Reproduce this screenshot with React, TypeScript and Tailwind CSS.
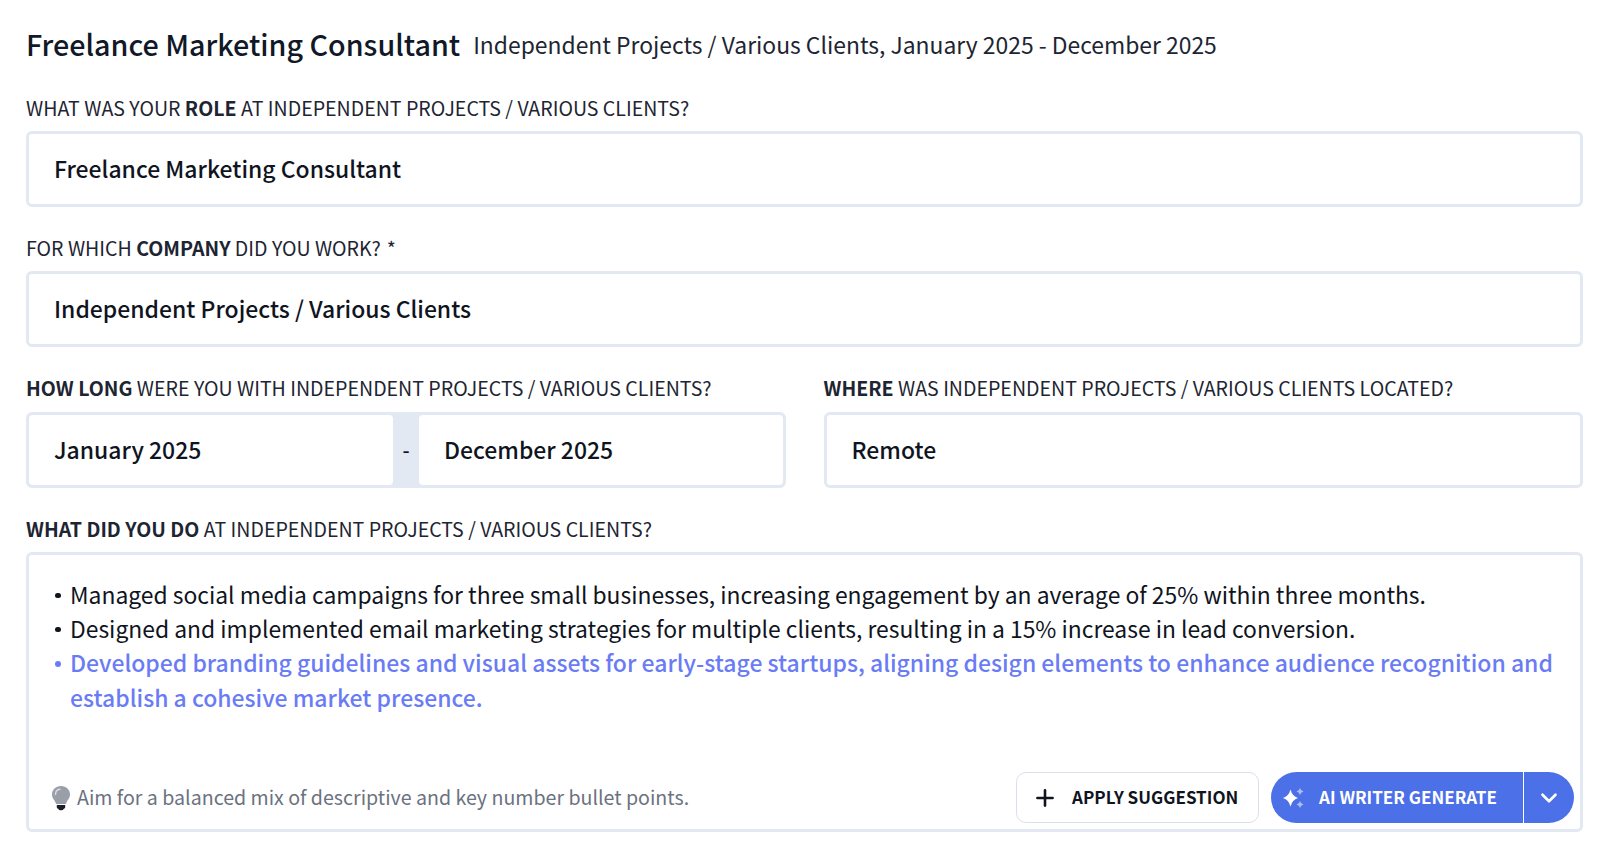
import React from "react";
import { ChevronDown, Plus } from "lucide-react";

const company = "INDEPENDENT PROJECTS / VARIOUS CLIENTS";

const Label = ({ children }: { children: React.ReactNode }) => (
  <label className="block h-[24px] text-[19.57px] leading-[24px] text-[#1e2532]">
    {children}
  </label>
);

const Field = ({ value }: { value: string }) => (
  <div className="flex h-[76px] items-center rounded-[6px] border-[3px] border-[#e3e9f2] bg-white px-[25px] pb-[1px] text-[22.95px] font-medium text-[#0f141e]">
    {value}
  </div>
);

const Bullet = () => (
  <span className="ml-[1px] mr-[9.5px] mt-[16px] h-[5.5px] w-[5.5px] shrink-0 rounded-full bg-current" />
);

const Sparkle = () => (
  <svg width="24" height="24" viewBox="0 0 24 24" fill="white">
    <path d="M9.500 3.500Q11.200 10.200 17 12 11.200 13.800 9.500 20.500 7.800 13.800 2 12 7.800 10.200 9.500 3.500z" />
    <path opacity=".55" d="M19 2Q19.600 4.900 22.500 5.500 19.600 6.100 19 9 18.400 6.100 15.500 5.500 18.400 4.900 19 2z" />
    <path opacity=".55" d="M19 15Q19.600 17.900 22.500 18.500 19.600 19.100 19 22 18.400 19.100 15.500 18.500 18.400 17.900 19 15z" />
  </svg>
);

const Bulb = () => (
  <svg width="20" height="26" viewBox="0 0 20 26">
    <path fill="#9a9ea8" d="M10 1C4.800 1 1 4.800 1 9.600c0 3.600 2.600 5.600 3.600 8.200.3.800.5 1.200 1.300 1.200h8.200c.8 0 1-.4 1.300-1.200 1-2.600 3.600-4.600 3.600-8.200C19 4.800 15.200 1 10 1z" />
    <path fill="#1b1e26" d="M5.800 20h8.400v2.200c0 .8-.6 1.300-1.400 1.500-.5 1-1.500 1.500-2.800 1.500s-2.300-.5-2.800-1.500c-.8-.2-1.400-.7-1.400-1.500z" />
    <path fill="none" stroke="#d9dbe0" strokeWidth="1.500" strokeLinecap="round" d="M4.500 9.500C4.500 6.500 6.500 4.500 9 4.200" />
  </svg>
);

export default function App() {
  return (
    <div className="h-[855px] w-[1600px] overflow-hidden bg-white pl-[26px] pr-[17px] font-['Noto_Sans_CJK_SC','Noto_Sans',sans-serif]">
      <div className="flex h-[88px] items-center gap-[13px]">
        <h1 className="text-[28.7px] font-medium leading-[40px] text-[#111827]">Freelance Marketing Consultant</h1>
        <span className="text-[22.88px] leading-[32px] text-[#1e2532]">
          Independent Projects / Various Clients, January 2025 - December 2025
        </span>
      </div>

      <div className="mt-[8px]">
        <Label>
          WHAT WAS YOUR <b>ROLE</b> AT {company}?
        </Label>
      </div>
      <div className="mt-[11px]">
        <Field value="Freelance Marketing Consultant" />
      </div>

      <div className="mt-[29px]">
        <Label>
          FOR WHICH <b>COMPANY</b> DID YOU WORK?<span className="ml-[6px]">*</span>
        </Label>
      </div>
      <div className="mt-[11px]">
        <Field value="Independent Projects / Various Clients" />
      </div>

      <div className="mt-[29px] grid grid-cols-2 gap-[38px]">
        <div>
          <Label>
            <b>HOW LONG</b> WERE YOU WITH {company}?
          </Label>
          <div className="mt-[12px] flex h-[76px] rounded-[6px] border-[3px] border-[#e3e9f2] bg-[#e3e9f2] text-[22.95px] font-medium text-[#0f141e]">
            <div className="flex w-[364px] items-center rounded-[4px] bg-white pb-[1px] pl-[25px]">January 2025</div>
            <div className="flex w-[26px] items-center justify-center text-[20px] font-medium text-[#0f141e]">-</div>
            <div className="flex flex-1 items-center rounded-[4px] bg-white pb-[1px] pl-[25px]">December 2025</div>
          </div>
        </div>
        <div>
          <Label>
            <b>WHERE</b> WAS {company} LOCATED?
          </Label>
          <div className="mt-[12px]">
            <Field value="Remote" />
          </div>
        </div>
      </div>

      <div className="mt-[29px]">
        <Label>
          <b>WHAT DID YOU DO</b> AT {company}?
        </Label>
      </div>
      <div className="mt-[11px] flex h-[280px] flex-col rounded-[6px] border-[3px] border-[#e3e9f2] px-[25px]">
        <ul className="flex-1 pt-[21.5px] text-[22.87px] leading-[34.400px] text-[#0f141e]">
          <li className="flex">
            <Bullet />
            <span>Managed social media campaigns for three small businesses, increasing engagement by an average of 25% within three months.</span>
          </li>
          <li className="flex">
            <Bullet />
            <span>Designed and implemented email marketing strategies for multiple clients, resulting in a 15% increase in lead conversion.</span>
          </li>
          <li className="flex text-[22.96px] font-medium text-[#6a7cf5]">
            <Bullet />
            <span>
              Developed branding guidelines and visual assets for early-stage startups, aligning design elements to enhance audience recognition and establish a cohesive market presence.
            </span>
          </li>
        </ul>
        <div className="mb-[6px] -mr-[19px] -ml-[3px] flex items-center">
          <Bulb />
          <span className="ml-[6px] flex-1 pb-[1px] text-[19.6px] leading-[30px] text-[#6b7280]">
            Aim for a balanced mix of descriptive and key number bullet points.
          </span>
          <button className="flex h-[51px] w-[243px] items-center rounded-[10px] border border-[#d9e0ea] bg-white pl-[15px] text-[17.05px] font-bold text-[#0f141e]">
            <Plus size={26} strokeWidth={2.4} />
            <span className="mb-[1px] ml-[14px]">APPLY SUGGESTION</span>
          </button>
          <div className="ml-[12px] flex h-[51px] w-[303px] overflow-hidden rounded-full bg-[#4c70e8] text-white">
            <div className="flex flex-1 items-center pl-[10px] text-[17.05px] font-bold">
              <Sparkle />
              <span className="mb-[1px] ml-[14px]">AI WRITER GENERATE</span>
            </div>
            <div className="flex w-[51px] items-center justify-center border-l border-white">
              <ChevronDown size={26} strokeWidth={2.5} />
            </div>
          </div>
        </div>
      </div>
    </div>
  );
}
